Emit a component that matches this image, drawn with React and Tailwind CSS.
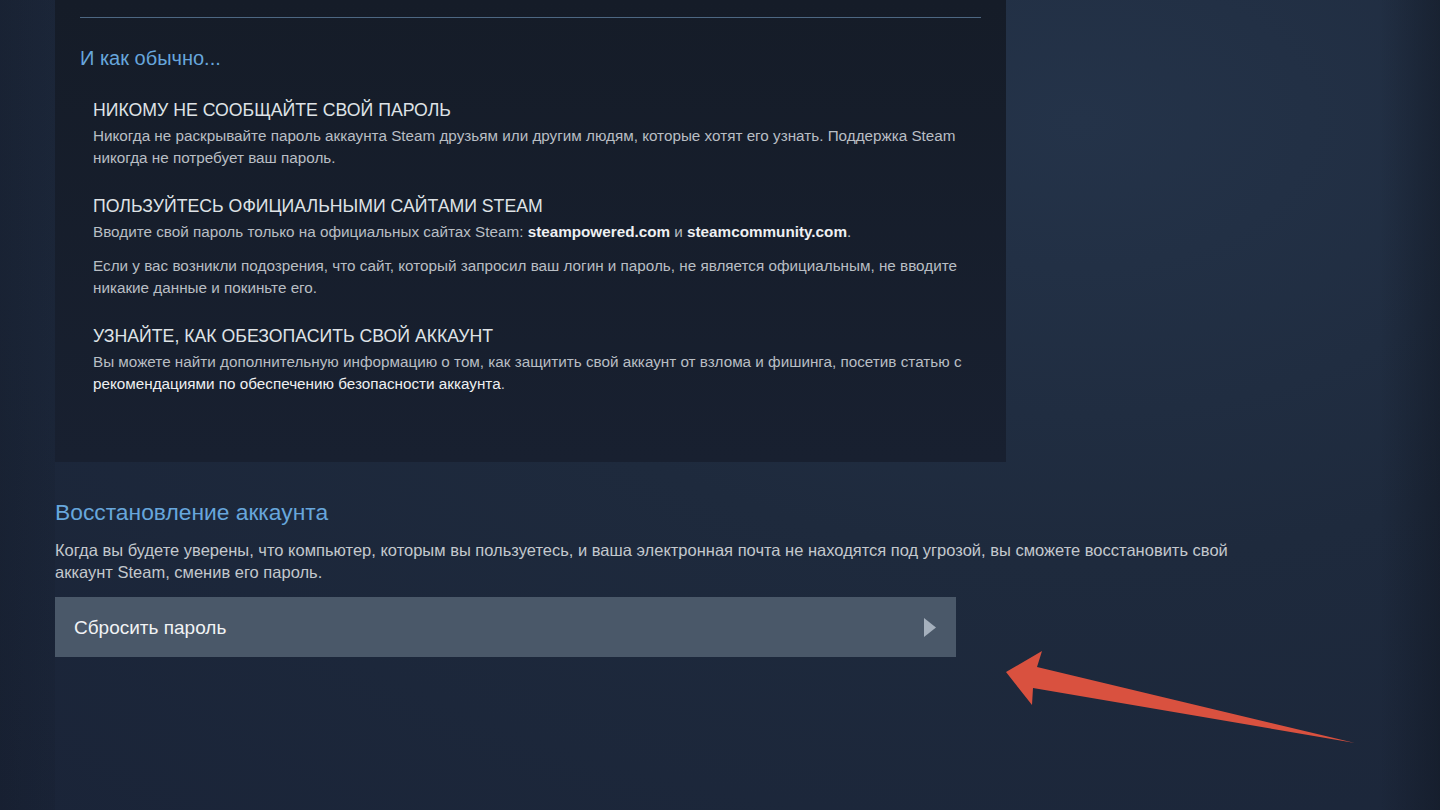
import React from "react";

const tips = [
  {
    title: "НИКОМУ НЕ СООБЩАЙТЕ СВОЙ ПАРОЛЬ",
    body: [
      <>Никогда не раскрывайте пароль аккаунта Steam друзьям или другим людям, которые хотят его узнать. Поддержка Steam никогда не потребует ваш пароль.</>,
    ],
  },
  {
    title: "ПОЛЬЗУЙТЕСЬ ОФИЦИАЛЬНЫМИ САЙТАМИ STEAM",
    body: [
      <>
        Вводите свой пароль только на официальных сайтах Steam:{" "}
        <b className="font-bold text-[#eef0f2]">steampowered.com</b> и{" "}
        <b className="font-bold text-[#eef0f2]">steamcommunity.com</b>.
      </>,
      <>Если у вас возникли подозрения, что сайт, который запросил ваш логин и пароль, не является официальным, не вводите никакие данные и покиньте его.</>,
    ],
  },
  {
    title: "УЗНАЙТЕ, КАК ОБЕЗОПАСИТЬ СВОЙ АККАУНТ",
    body: [
      <>
        Вы можете найти дополнительную информацию о том, как защитить свой аккаунт от взлома и фишинга, посетив статью с{" "}
        <span className="text-[#eef0f2]">рекомендациями по обеспечению безопасности аккаунта</span>.
      </>,
    ],
  },
];

function Tip({ title, body, first }) {
  return (
    <div className={first ? "pl-[13px]" : "pl-[13px] mt-6"}>
      <div className="text-[17.7px] leading-[26px] text-[#dfe3e6]">{title}</div>
      {body.map((p, i) => (
        <p key={i} className={i === 0 ? "mt-[2px] text-[15.25px] leading-[22px] text-[#b9bec4]" : "mt-3 text-[15.25px] leading-[22px] text-[#b9bec4]"}>
          {p}
        </p>
      ))}
    </div>
  );
}

export default function App() {
  return (
    <div
      className="relative w-full h-[810px] overflow-hidden bg-[radial-gradient(ellipse_at_75%_15%,#243349_0%,#1e2a3d_45%,#1a2438_100%)]"
      style={{ fontFamily: '"Liberation Sans", Arial, sans-serif' }}
    >
      <div className="absolute inset-y-0 right-0 w-[60px] bg-[linear-gradient(90deg,rgba(15,20,30,0)_0%,rgba(15,20,30,0.45)_100%)]" />
      <div className="absolute inset-y-0 left-0 w-[55px] bg-[linear-gradient(90deg,rgba(15,20,30,0.25)_0%,rgba(15,20,30,0.1)_100%)]" />

      <div className="relative pl-[55px]">
        {/* Панель с советами */}
        <div className="w-[951px] bg-[linear-gradient(180deg,#151c28_0%,#182030_100%)] px-[25px] pt-[17px] pb-[67px]">
          <div className="h-px bg-[#4d6782]" />
          <h2 className="mt-[28px] text-[20px] leading-[24px] text-[#67a6dc]">И как обычно...</h2>
          <div className="mt-[27px]">
            {tips.map((t, i) => (
              <Tip key={i} first={i === 0} {...t} />
            ))}
          </div>
        </div>

        {/* Восстановление */}
        <h2 className="mt-9 text-[22.8px] leading-[28px] text-[#67a6dc]">Восстановление аккаунта</h2>
        <p className="mt-[13px] w-[1200px] text-[16.5px] leading-[22px] text-[#c3c8cd]">
          Когда вы будете уверены, что компьютер, которым вы пользуетесь, и ваша электронная почта не находятся под угрозой, вы сможете восстановить свой аккаунт Steam, сменив его пароль.
        </p>
        <button className="mt-[14px] w-[901px] h-[60px] flex items-center justify-between pl-[19px] pr-[20px] bg-[#4a5869] text-left">
          <span className="text-[19px] leading-[24px] mt-px text-[#f1f3f5]">Сбросить пароль</span>
          <svg width="12" height="19" viewBox="0 0 12 19">
            <polygon points="0,0 12,9.5 0,19" fill="#a5b0bd" />
          </svg>
        </button>
      </div>

      {/* Стрелка-указатель */}
      <svg className="absolute left-0 top-0 pointer-events-none" width="1440" height="810" viewBox="0 0 1440 810">
        <polygon
          points="1006,672 1042,651 1037,667 1355,743 1033,688 1032,705"
          fill="#d9513f"
        />
      </svg>
    </div>
  );
}
